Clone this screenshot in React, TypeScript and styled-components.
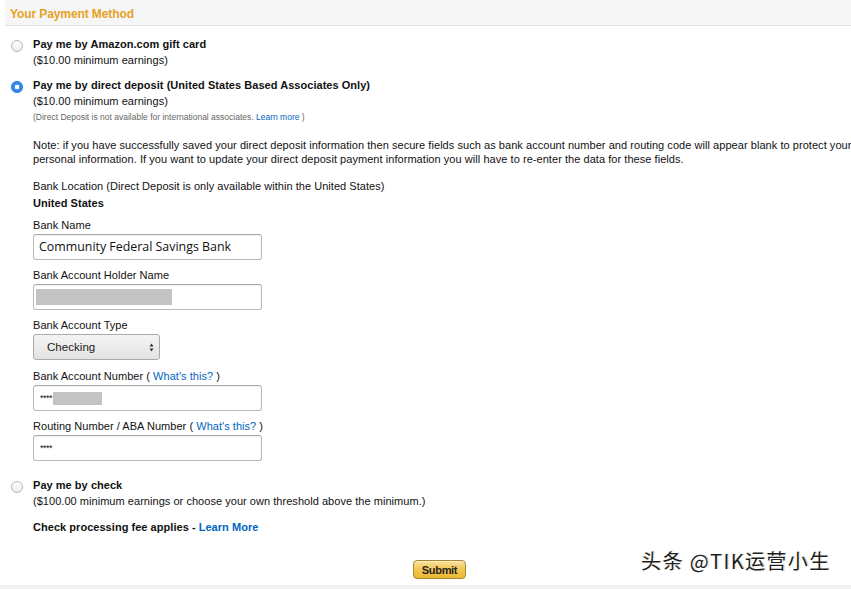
import React from "react";
import styled, { createGlobalStyle } from "styled-components";

const Global = createGlobalStyle`
  html, body { margin: 0; padding: 0; background: #fff; }
  body { font-family: "Liberation Sans", Arial, sans-serif; color: #111; }
`;

const Page = styled.div`
  position: relative;
  width: 851px;
  height: 589px;
  overflow: hidden;
  background: #fff;
  font-size: 11px;
  line-height: 16px;
  letter-spacing: 0.04px;
`;

const Header = styled.div`
  margin-left: 5px;
  height: 25px;
  padding-left: 5px;
  background: #f6f6f6;
  border-bottom: 1px solid #e2e2e2;
  display: flex;
  align-items: center;
`;

const Title = styled.h2`
  margin: 0;
  padding-top: 3px;
  font-size: 12px;
  font-weight: bold;
  color: #e5a226;
  letter-spacing: -0.1px;
`;

const Option = styled.div<{ $mt: number }>`
  display: flex;
  gap: 10px;
  padding-left: 11px;
  margin-top: ${(p) => p.$mt}px;
`;

const Radio = styled.span<{ $checked?: boolean }>`
  flex: none;
  box-sizing: border-box;
  width: 12px;
  height: 12px;
  margin-top: 4px;
  border-radius: 50%;
  border: 1px solid ${(p) => (p.$checked ? "#2a78d8" : "#b8b8b8")};
  background: ${(p) =>
    p.$checked
      ? "radial-gradient(circle, #ffffff 0 2px, #3d8ef0 2.6px, #2c7ae0 100%)"
      : "linear-gradient(#ffffff, #ececec)"};
  box-shadow: ${(p) => (p.$checked ? "0 0 1px #7fb3f5" : "none")};
`;

const OptionBody = styled.div`
  display: flex;
  flex-direction: column;
`;

const Strong = styled.div`
  font-weight: bold;
  white-space: nowrap;
`;

const Line = styled.div`
  white-space: nowrap;
`;

const Fine = styled.div`
  font-size: 8.5px;
  letter-spacing: 0;
  color: #666;
  white-space: nowrap;
`;

const Link = styled.a`
  color: #0066c0;
  text-decoration: none;
`;

const BoldLink = styled(Link)`
  font-weight: bold;
`;

const Section = styled.div<{ $mt: number }>`
  padding-left: 33px;
  margin-top: ${(p) => p.$mt}px;
  display: flex;
  flex-direction: column;
`;

const Note = styled.div`
  line-height: 14px;
  white-space: nowrap;
  letter-spacing: 0.05px;
`;

const Field = styled.div<{ $mt: number }>`
  display: flex;
  flex-direction: column;
  gap: 1px;
  margin-top: ${(p) => p.$mt}px;
`;

const InputBox = styled.div<{ $pad?: number }>`
  box-sizing: border-box;
  width: 229px;
  height: 26px;
  border: 1px solid #b9b9b9;
  border-top-color: #a8a8a8;
  border-radius: 3px;
  box-shadow: inset 0 1px 1px rgba(0, 0, 0, 0.06);
  background: #fff;
  display: flex;
  align-items: center;
  padding-left: ${(p) => p.$pad ?? 5}px;
  gap: 1px;
  font-family: "Open Sans", "DejaVu Sans", sans-serif;
  font-size: 12.4px;
  letter-spacing: 0;
  color: #111;
`;

const Stars = styled.span`
  font-family: "Liberation Sans", Arial, sans-serif;
  font-size: 9px;
  padding-left: 1px;
  letter-spacing: -0.5px;
`;

const Redact = styled.span<{ $w: number; $h: number }>`
  display: inline-block;
  width: ${(p) => p.$w}px;
  height: ${(p) => p.$h}px;
  background: #c3c3c3;
`;

const Select = styled.div`
  box-sizing: border-box;
  width: 127px;
  height: 26px;
  border: 1px solid #ababab;
  border-radius: 3px;
  background: linear-gradient(#f4f4f4, #e3e3e3);
  display: flex;
  align-items: center;
  justify-content: space-between;
  padding: 0 5px 0 13px;
  font-size: 11.5px;
  color: #222;
`;

const Arrows = styled.svg`
  width: 5px;
  height: 9px;
`;

const Footer = styled.div`
  margin-top: 25px;
  padding-left: 413px;
  display: flex;
`;

const SubmitButton = styled.button`
  box-sizing: border-box;
  width: 53px;
  height: 19px;
  padding: 0;
  border: 1px solid #a88734;
  border-radius: 4px;
  background: linear-gradient(#f9e19e, #f2c650 50%, #ebb830);
  box-shadow: inset 0 1px 0 rgba(255, 255, 255, 0.5);
  font-family: "Liberation Sans", Arial, sans-serif;
  font-size: 11px;
  font-weight: bold;
  color: #222;
  letter-spacing: -0.3px;
`;

const BottomBar = styled.div`
  position: absolute;
  left: 0;
  right: 0;
  bottom: 0;
  height: 4px;
  background: #f1f1f1;
`;

const Watermark = styled.div`
  position: absolute;
  left: 641px;
  top: 548px;
  font-family: "Noto Sans CJK SC", "Noto Sans", sans-serif;
  font-size: 20px;
  line-height: 26px;
  color: #1e1e1e;
  letter-spacing: 1.4px;
  text-shadow: 1px 1px 0 #fff, -1px -1px 0 #fff, 1px 0 1px #999;
  white-space: nowrap;
`;

export default function App() {
  return (
    <>
      <Global />
      <Page>
        <Header>
          <Title>Your Payment Method</Title>
        </Header>

        <Option $mt={10}>
          <Radio />
          <OptionBody>
            <Strong>Pay me by Amazon.com gift card</Strong>
            <Line>($10.00 minimum earnings)</Line>
          </OptionBody>
        </Option>

        <Option $mt={9}>
          <Radio $checked />
          <OptionBody>
            <Strong>Pay me by direct deposit (United States Based Associates Only)</Strong>
            <Line>($10.00 minimum earnings)</Line>
            <Fine>
              (Direct Deposit is not available for international associates. <Link href="#">Learn more</Link> )
            </Fine>
          </OptionBody>
        </Option>

        <Section $mt={13}>
          <Note>
            Note: if you have successfully saved your direct deposit information then secure fields such as bank account number and routing code will appear blank to protect your
          </Note>
          <Note>
            personal information. If you want to update your direct deposit payment information you will have to re-enter the data for these fields.
          </Note>

          <Field $mt={12}>
            <Line>Bank Location (Direct Deposit is only available within the United States)</Line>
            <Strong>United States</Strong>
          </Field>

          <Field $mt={6}>
            <Line>Bank Name</Line>
            <InputBox>Community Federal Savings Bank</InputBox>
          </Field>

          <Field $mt={7}>
            <Line>Bank Account Holder Name</Line>
            <InputBox $pad={2}>
              <Redact $w={136} $h={16} />
            </InputBox>
          </Field>

          <Field $mt={7}>
            <Line>Bank Account Type</Line>
            <Select>
              <span>Checking</span>
              <Arrows viewBox="0 0 5 9">
                <path d="M2.5 0.5 L4.5 3.5 L0.5 3.5 Z M2.5 8.5 L4.5 5.5 L0.5 5.5 Z" fill="#333" />
              </Arrows>
            </Select>
          </Field>

          <Field $mt={8}>
            <Line>
              Bank Account Number ( <Link href="#">What's this?</Link> )
            </Line>
            <InputBox>
              <Stars>****</Stars>
              <Redact $w={49} $h={13} />
            </InputBox>
          </Field>

          <Field $mt={7}>
            <Line>
              Routing Number / ABA Number ( <Link href="#">What's this?</Link> )
            </Line>
            <InputBox>
              <Stars>****</Stars>
            </InputBox>
          </Field>
        </Section>

        <Option $mt={16}>
          <Radio />
          <OptionBody>
            <Strong>Pay me by check</Strong>
            <Line>($100.00 minimum earnings or choose your own threshold above the minimum.)</Line>
          </OptionBody>
        </Option>

        <Section $mt={10}>
          <Strong>
            Check processing fee applies - <BoldLink href="#">Learn More</BoldLink>
          </Strong>
        </Section>

        <Footer>
          <SubmitButton type="button">Submit</SubmitButton>
        </Footer>

        <BottomBar />
        <Watermark>头条 @TIK运营小生</Watermark>
      </Page>
    </>
  );
}
